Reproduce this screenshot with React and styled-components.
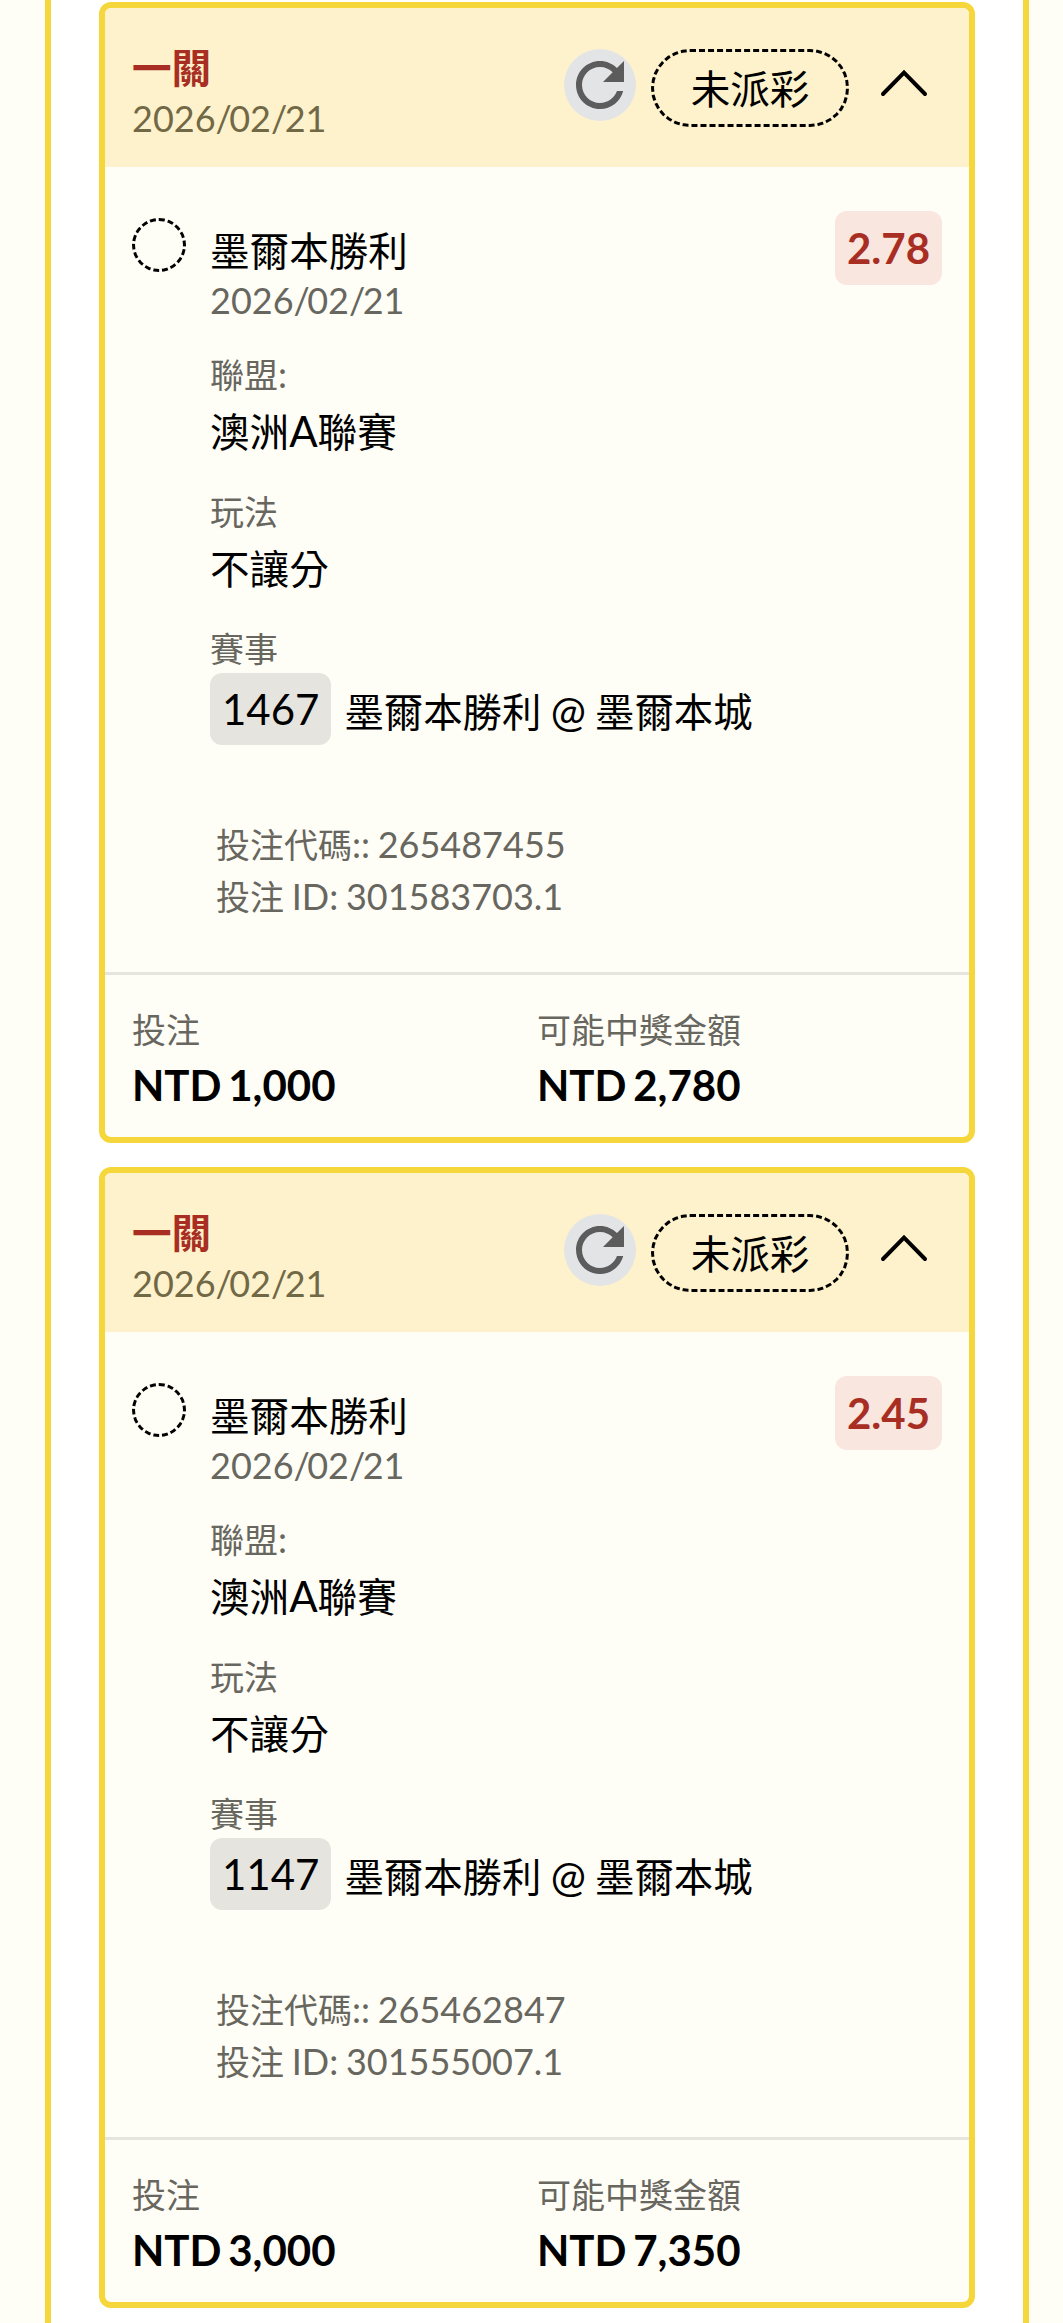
import React, { useState } from "react";
import styled, { createGlobalStyle } from "styled-components";

/* =========================
   Mock data
   ========================= */
const bets = [
  {
    id: "301583703.1",
    type: "一關",
    date: "2026/02/21",
    status: "未派彩",
    pick: "墨爾本勝利",
    odds: "2.78",
    league: ["澳洲", "A", "聯賽"],
    market: "不讓分",
    eventNo: "1467",
    home: "墨爾本勝利",
    away: "墨爾本城",
    code: "265487455",
    stake: "1,000",
    payout: "2,780",
  },
  {
    id: "301555007.1",
    type: "一關",
    date: "2026/02/21",
    status: "未派彩",
    pick: "墨爾本勝利",
    odds: "2.45",
    league: ["澳洲", "A", "聯賽"],
    market: "不讓分",
    eventNo: "1147",
    home: "墨爾本勝利",
    away: "墨爾本城",
    code: "265462847",
    stake: "3,000",
    payout: "7,350",
  },
];

const RefreshIcon = () => (
  <svg width="72" height="72" viewBox="0 0 24 24" fill="#5c5c5c">
    <path d="M17.65 6.35C16.2 4.9 14.21 4 12 4c-4.42 0-7.99 3.58-7.99 8s3.57 8 7.99 8c3.73 0 6.84-2.55 7.73-6h-2.08c-.82 2.33-3.04 4-5.65 4-3.31 0-6-2.69-6-6s2.69-6 6-6c1.66 0 3.14.69 4.22 1.78L13 11h7V4l-2.35 2.35z" />
  </svg>
);

const ChevronIcon = () => (
  <svg width="48" height="28" viewBox="0 0 48 28" fill="none">
    <path
      d="M3 25 24 3.5 45 25"
      stroke="#000"
      strokeWidth="4"
      strokeLinecap="round"
    />
  </svg>
);

// slashes sit tighter than the digits
const DateText = ({ value }) =>
  value.split("/").map((part, i) => (
    <React.Fragment key={i}>
      {i > 0 && <Slash>/</Slash>}
      {part}
    </React.Fragment>
  ));

function BetCard({ bet }) {
  const [open, setOpen] = useState(true);

  return (
    <Card>
      <CardHeader>
        <div>
          <BetType>{bet.type}</BetType>
          <HeaderDate>
            <DateText value={bet.date} />
          </HeaderDate>
        </div>
        <Controls>
          <RefreshButton aria-label="refresh">
            <RefreshIcon />
          </RefreshButton>
          <Status>{bet.status}</Status>
          <ToggleButton $open={open} onClick={() => setOpen(!open)}>
            <ChevronIcon />
          </ToggleButton>
        </Controls>
      </CardHeader>

      {open && (
        <Leg>
          <PendingMark />
          <LegInfo>
            <Pick>{bet.pick}</Pick>
            <LegDate>
              <DateText value={bet.date} />
            </LegDate>

            <Label>
              聯盟<LatinSmall>:</LatinSmall>
            </Label>
            <Value>
              {bet.league[0]}
              <Latin>{bet.league[1]}</Latin>
              {bet.league[2]}
            </Value>

            <Label>玩法</Label>
            <Value>{bet.market}</Value>

            <Label>賽事</Label>
            <EventRow>
              <EventNo>{bet.eventNo}</EventNo>
              <Teams>
                {bet.home}
                <Latin> @ </Latin>
                {bet.away}
              </Teams>
            </EventRow>

            <Codes>
              <div>
                投注代碼<LatinSmall>:: {bet.code}</LatinSmall>
              </div>
              <div>
                投注<LatinSmall> ID: {bet.id}</LatinSmall>
              </div>
            </Codes>
          </LegInfo>
          <Odds>{bet.odds}</Odds>
        </Leg>
      )}

      <CardFooter>
        <div>
          <FooterLabel>投注</FooterLabel>
          <Amount>NTD {bet.stake}</Amount>
        </div>
        <div>
          <FooterLabel>可能中獎金額</FooterLabel>
          <Amount>NTD {bet.payout}</Amount>
        </div>
      </CardFooter>
    </Card>
  );
}

export default function App() {
  return (
    <>
      <GlobalStyle />
      <PageWrapper>
        <BetList>
          {bets.map((bet) => (
            <BetCard key={bet.id} bet={bet} />
          ))}
        </BetList>
      </PageWrapper>
    </>
  );
}

/* =========================
   Styles
   ========================= */
const GlobalStyle = createGlobalStyle`
  * {
    box-sizing: border-box;
  }
  body {
    margin: 0;
    background: #fffef6;
    color: #000;
    font-family: Lato, "Noto Sans CJK TC", sans-serif;
  }
  button {
    border: 0;
    padding: 0;
    background: none;
    cursor: pointer;
  }
  svg {
    display: block;
  }
`;

const PageWrapper = styled.div`
  height: 2323px;
  padding: 0 34px 0 45px;
  overflow: hidden;
`;

const BetList = styled.div`
  height: 100%;
  padding: 2px 48px 0;
  display: flex;
  flex-direction: column;
  gap: 24px;
  background: #fff;
  border: solid #f5d73b;
  border-width: 0 6px;
`;

const Card = styled.section`
  border: 6px solid #f5d73b;
  border-radius: 12px;
  background: #fffef6;
  overflow: hidden;
`;

const CardHeader = styled.header`
  height: 159px;
  padding: 36px 41px 0 27px;
  display: flex;
  justify-content: space-between;
  background: #fef2cc;
`;

const BetType = styled.div`
  font-size: 39.6px;
  font-weight: 700;
  line-height: 48px;
  color: #a82e23;
`;

const HeaderDate = styled.div`
  font-size: 36px;
  line-height: 53px;
  color: #716846;
`;

const Slash = styled.span`
  letter-spacing: -2.6px;
`;

const Controls = styled.div`
  display: flex;
  align-items: flex-start;
  padding-top: 5px;
`;

const RefreshButton = styled.button`
  width: 72px;
  height: 72px;
  margin-right: 15px;
  border-radius: 50%;
  background: #e3e4e6;
`;

const Status = styled.div`
  width: 198px;
  height: 78px;
  margin-right: 31px;
  padding-top: 2px;
  display: flex;
  align-items: center;
  justify-content: center;
  border: 3px dashed #000;
  border-radius: 39px;
  font-size: 39.6px;
  line-height: 60px;
`;

const ToggleButton = styled.button`
  margin-top: 20px;
  transform: ${({ $open }) => ($open ? "none" : "rotate(180deg)")};
`;

const Leg = styled.div`
  padding: 44px 27px 49px;
  display: flex;
  align-items: flex-start;
`;

const PendingMark = styled.span`
  width: 54px;
  height: 54px;
  margin: 7px 24px 0 0;
  border: 3px dashed #000;
  border-radius: 50%;
`;

const LegInfo = styled.div`
  flex: 1;
  padding-top: 15px;
`;

const Pick = styled.div`
  font-size: 39.6px;
  line-height: 49px;
`;

const LegDate = styled.div`
  margin-bottom: 26px;
  font-size: 36px;
  line-height: 50px;
  color: #67665f;
`;

const Label = styled.div`
  font-size: 34px;
  line-height: 48px;
  color: #67665f;
`;

const Value = styled.div`
  height: 64px;
  margin-bottom: 25px;
  font-size: 39.6px;
  line-height: 66px;
`;

/* Latin runs are set slightly larger than the Chinese text around them */
const Latin = styled.span`
  font-size: 42px;
  line-height: 1;
  white-space: pre;
  word-spacing: -1.5px;
`;

const LatinSmall = styled(Latin)`
  font-size: 36px;
`;

const EventRow = styled.div`
  display: flex;
  align-items: center;
  gap: 13px;
`;

const EventNo = styled.span`
  height: 72px;
  padding: 0 12px;
  border-radius: 12px;
  background: #e6e4de;
  font-size: 42px;
  line-height: 73px;
`;

const Teams = styled.span`
  padding-top: 5px;
  font-size: 39.4px;
  line-height: 60px;
`;

const Codes = styled.div`
  margin-top: 74px;
  padding-left: 6px;
  font-size: 34px;
  line-height: 52px;
  color: #67665f;
`;

const Odds = styled.span`
  height: 74px;
  padding: 0 12px;
  border-radius: 12px;
  background: #f8e6df;
  color: #a82e23;
  font-size: 42px;
  font-weight: 700;
  line-height: 74px;
`;

const CardFooter = styled.footer`
  height: 165px;
  padding: 31px 27px 0;
  display: grid;
  grid-template-columns: 1fr 1fr;
  border-top: 3px solid #e6e4de;
`;

const FooterLabel = styled(Label)``;

const Amount = styled.div`
  font-size: 42px;
  font-weight: 700;
  line-height: 62px;
  word-spacing: -3.5px;
`;
